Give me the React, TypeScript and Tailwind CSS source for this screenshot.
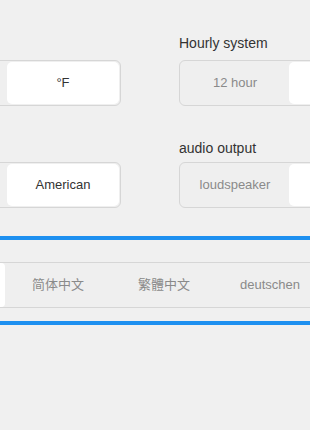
import React from "react";

function Seg({
  items,
  selected,
  w,
}: {
  items: string[];
  selected: number;
  w: string;
}) {
  return (
    <div className="flex h-[46px] rounded-[6px] border border-[#d6d6d6] bg-[#efefef] p-px">
      {items.map((t, i) => (
        <div
          key={i}
          className={
            i === selected
              ? `${w} flex items-center justify-center rounded-[5px] bg-white text-[13px] text-[#333]`
              : `${w} flex items-center justify-center text-[13px] text-[#8a8a8a]`
          }
        >
          {t}
        </div>
      ))}
    </div>
  );
}

export default function App() {
  return (
    <div className="h-[430px] w-[310px] overflow-hidden bg-[#f0f0f0] font-['Liberation_Sans','Noto_Sans_CJK_SC',sans-serif]">
      <div className="ml-[-107px] flex w-[700px] flex-col pt-[33px]">
        <div className="flex gap-[58px]">
          <div className="flex flex-col">
            <div className="h-5 text-sm leading-5 text-[#333]" />
            <div className="mt-[7px]">
              <Seg items={["", "°F"]} selected={1} w="w-[112px]" />
            </div>
          </div>
          <div className="flex flex-col">
            <div className="h-5 text-sm leading-5 text-[#333]">Hourly system</div>
            <div className="mt-[7px]">
              <Seg items={["12 hour", ""]} selected={1} w="w-[108px]" />
            </div>
          </div>
        </div>
        <div className="mt-[32px] flex gap-[58px]">
          <div className="flex flex-col">
            <div className="h-5 text-sm leading-5 text-[#333]" />
            <div className="mt-[4px]">
              <Seg items={["", "American"]} selected={1} w="w-[112px]" />
            </div>
          </div>
          <div className="flex flex-col">
            <div className="h-5 text-sm leading-5 text-[#333]">audio output</div>
            <div className="mt-[4px]">
              <Seg items={["loudspeaker", ""]} selected={1} w="w-[108px]" />
            </div>
          </div>
        </div>
      </div>
      <div className="mt-[28px] h-1 w-full bg-[#1e90f0]" />
      <div className="mt-[22px] ml-[-101px] flex h-[46px] w-[540px] border-y border-[#d6d6d6] bg-[#efefef]">
        <div className="w-[106px] rounded-[4px] bg-white" />
        <div className="flex w-[106px] items-center justify-center text-[13px] text-[#8a8a8a]">
          简体中文
        </div>
        <div className="flex w-[106px] items-center justify-center text-[13px] text-[#8a8a8a]">
          繁體中文
        </div>
        <div className="flex w-[106px] items-center justify-center text-[13px] text-[#8a8a8a]">
          deutschen
        </div>
      </div>
      <div className="mt-[13px] h-1 w-full bg-[#1e90f0]" />
    </div>
  );
}
